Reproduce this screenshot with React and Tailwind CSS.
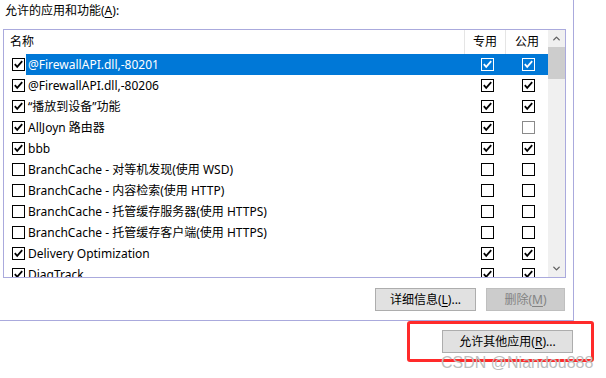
import { ChevronUp, ChevronDown } from 'lucide-react'

const rows = [
  { name: '@FirewallAPI.dll,-80201', on: true, priv: true, pub: true, selected: true },
  { name: '@FirewallAPI.dll,-80206', on: true, priv: true, pub: true },
  { name: '“播放到设备”功能', on: true, priv: true, pub: true },
  { name: 'AllJoyn 路由器', on: true, priv: true, pub: false, dim: true },
  { name: 'bbb', on: true, priv: true, pub: true },
  { name: 'BranchCache - 对等机发现(使用 WSD)', on: false, priv: false, pub: false },
  { name: 'BranchCache - 内容检索(使用 HTTP)', on: false, priv: false, pub: false },
  { name: 'BranchCache - 托管缓存服务器(使用 HTTPS)', on: false, priv: false, pub: false },
  { name: 'BranchCache - 托管缓存客户端(使用 HTTPS)', on: false, priv: false, pub: false },
  { name: 'Delivery Optimization', on: true, priv: true, pub: true },
  { name: 'DiagTrack', on: true, priv: true, pub: true },
]

function Check({ checked, light, dim }) {
  const stroke = light ? '#ffffff' : dim ? '#8a8a8a' : '#000000'
  return (
    <svg width="13" height="13" viewBox="0 0 13 13" className="shrink-0">
      <rect x="0.5" y="0.5" width="12" height="12" fill={light ? 'none' : '#ffffff'} stroke={stroke} />
      {checked && (
        <path d="M2.8 6.2 L5.2 8.8 L10.2 3.2" fill="none" stroke={stroke} strokeWidth="1.8" />
      )}
    </svg>
  )
}

function Mnemonic({ children }) {
  return <span className="underline underline-offset-2">{children}</span>
}

export default function App() {
  return (
    <div
      className="relative w-[606px] h-[378px] overflow-hidden bg-white text-[12px] text-black"
      style={{ fontFamily: '"Noto Sans", "Noto Sans CJK SC", sans-serif' }}
    >
      {/* dialog panel */}
      <div className="w-[574px] h-[321px] border-r border-b border-[#aaaadd]">
        <div className="h-[29px] pl-[5px] pt-[2px] leading-[17px]">
          允许的应用和功能(<Mnemonic>A</Mnemonic>):
        </div>

        {/* list view */}
        <div className="ml-[3px] w-[563px] h-[249px] border border-[#aaaadd] flex">
          <div className="flex-1 flex flex-col overflow-hidden">
            {/* header */}
            <div className="h-[24px] flex shrink-0">
              <div className="w-[461px] pl-[6px] flex items-center border-r border-[#e5e5e5]">名称</div>
              <div className="w-[41px] flex items-center justify-center border-r border-[#e5e5e5]">专用</div>
              <div className="flex-1 flex items-center justify-center">公用</div>
            </div>
            {rows.map((r) => (
              <div key={r.name} className="h-[21px] flex items-center shrink-0">
                <div className="pl-[8px] pr-[1px] flex items-center">
                  <Check checked={r.on} />
                </div>
                <div
                  className={
                    r.selected
                      ? 'flex-1 h-full flex items-center bg-[#0078d7] text-white'
                      : 'flex-1 h-full flex items-center'
                  }
                >
                  <div className="w-[441px] pl-[2px] whitespace-nowrap">{r.name}</div>
                  <div className="w-[41px] flex justify-center">
                    <Check checked={r.priv} light={r.selected} />
                  </div>
                  <div className="w-[41px] flex justify-center">
                    <Check checked={r.pub} light={r.selected} dim={r.dim} />
                  </div>
                </div>
              </div>
            ))}
          </div>

          {/* scrollbar */}
          <div className="w-[17px] bg-[#f0f0f0] flex flex-col">
            <div className="h-[17px] flex items-center justify-center text-[#606060]">
              <ChevronUp size={11} strokeWidth={3} />
            </div>
            <div className="h-[32px] bg-[#cdcdcd]" />
            <div className="flex-1" />
            <div className="h-[17px] flex items-center justify-center text-[#606060]">
              <ChevronDown size={11} strokeWidth={3} />
            </div>
          </div>
        </div>

        <div className="mt-[10px] pr-[8px] flex justify-end gap-[10px]">
          <button className="w-[101px] h-[23px] bg-[#e1e1e1] border border-[#adadad] leading-none">
            详细信息(<Mnemonic>L</Mnemonic>)...
          </button>
          <button className="w-[79px] h-[23px] bg-[#cccccc] border border-[#bfbfbf] text-[#838383] leading-none">
            删除(<Mnemonic>M</Mnemonic>)
          </button>
        </div>
      </div>

      <div className="mt-[9px] pr-[33px] flex justify-end">
        <button className="w-[131px] h-[23px] bg-[#e1e1e1] border border-[#adadad] leading-none">
          允许其他应用(<Mnemonic>R</Mnemonic>)...
        </button>
      </div>

      {/* annotation */}
      <div className="absolute left-[407px] top-[321px] w-[187px] h-[41px] border-[3px] border-[#ff2a2a] rounded-[3px]" />
      <div className="absolute left-[441px] top-[351px] text-[16px] text-[#bdbdbd] whitespace-nowrap" style={{ fontFamily: '"Liberation Sans", sans-serif' }}>
        CSDN @Niandou888
      </div>
    </div>
  )
}
